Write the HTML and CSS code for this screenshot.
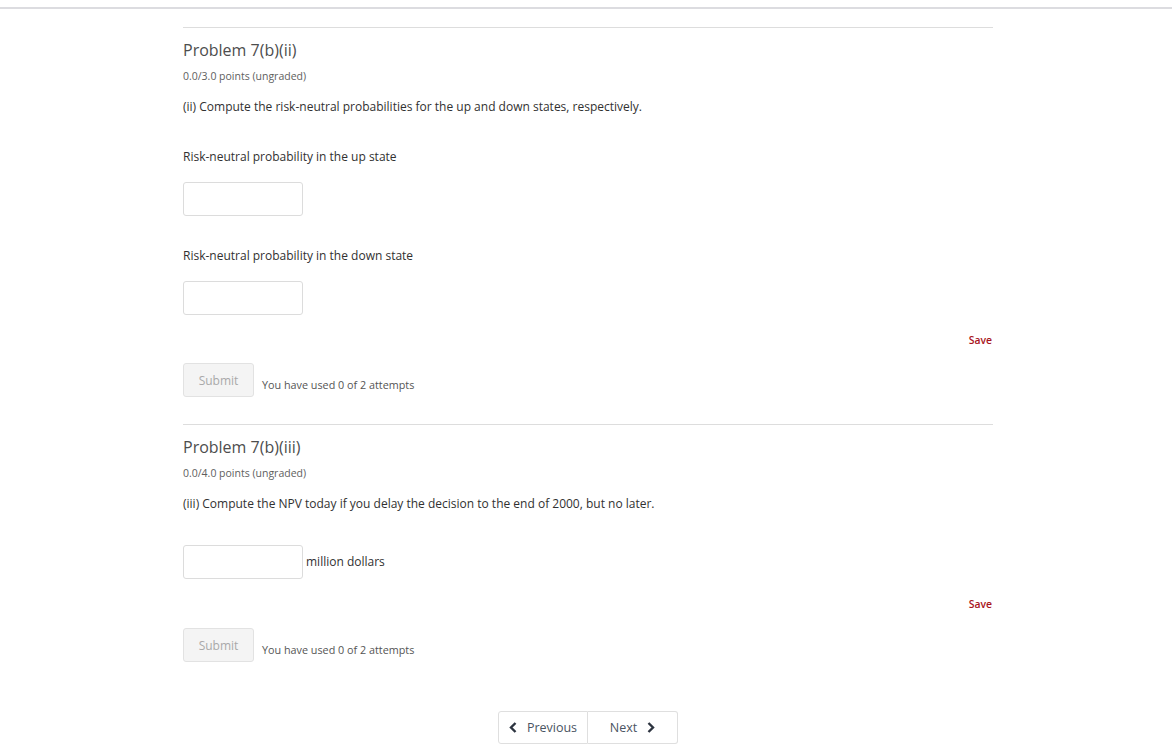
FILE: index.html
```html
<!DOCTYPE html>
<html lang="en">
<head>
  <meta charset="UTF-8" />
  <title>Problem 7(b)</title>
  <link rel="stylesheet" href="styles.css">
</head>
<body>
  <div class="page">
    <div class="content">

      <!-- Problem 7(b)(ii) -->
      <div class="problem">
        <h3 class="problem-title">Problem 7(b)(ii)</h3>
        <div class="points">0.0/3.0 points (ungraded)</div>
        <p class="question">(ii) Compute the risk-neutral probabilities for the up and down states, respectively.</p>

        <label class="field-label">Risk-neutral probability in the up state</label>
        <input class="answer" type="text">

        <label class="field-label second">Risk-neutral probability in the down state</label>
        <input class="answer" type="text">

        <div class="save-row"><span class="save">Save</span></div>
        <div class="submit-row">
          <button class="submit" disabled>Submit</button>
          <span class="attempts">You have used 0 of 2 attempts</span>
        </div>
      </div>

      <!-- Problem 7(b)(iii) -->
      <div class="problem">
        <h3 class="problem-title">Problem 7(b)(iii)</h3>
        <div class="points">0.0/4.0 points (ungraded)</div>
        <p class="question">(iii) Compute the NPV today if you delay the decision to the end of 2000, but no later.</p>

        <div class="unit-row">
          <input class="answer" type="text">
          <span class="unit">million dollars</span>
        </div>

        <div class="save-row"><span class="save">Save</span></div>
        <div class="submit-row last">
          <button class="submit" disabled>Submit</button>
          <span class="attempts">You have used 0 of 2 attempts</span>
        </div>
      </div>

      <div class="nav">
        <button class="nav-btn">
          <svg width="8" height="11" viewBox="0 0 8 11"><path d="M6.5 1 L2 5.5 L6.5 10" fill="none" stroke="#2d3440" stroke-width="2.4"/></svg>
          Previous
        </button>
        <button class="nav-btn">
          Next
          <svg width="8" height="11" viewBox="0 0 8 11"><path d="M1.5 1 L6 5.5 L1.5 10" fill="none" stroke="#2d3440" stroke-width="2.4"/></svg>
        </button>
      </div>

    </div>
  </div>
</body>
</html>
```

FILE: styles.css
```css
body {
  margin: 0;
  background: #fff;
  font-family: 'Open Sans', sans-serif;
  color: #313131;
}

.page {
  margin-top: 7px;
  border-top: 2px solid #dcdce0;
  padding-left: 4px;
}

.content {
  width: 810px;
  margin: 0 auto;
  padding-top: 18px;
}

.problem {
  border-top: 1px solid #dddddd;
}

.problem-title {
  margin: 12px 0 0;
  font-size: 16px;
  line-height: 20px;
  font-weight: 400;
  color: #4d4d4d;
}

.points {
  margin-top: 9px;
  font-size: 10.5px;
  line-height: 14px;
  color: #5e5e5e;
}

.question {
  margin: 16px 0 0;
  font-size: 12px;
  line-height: 16px;
}

.field-label {
  display: block;
  margin-top: 34px;
  font-size: 12px;
  line-height: 16px;
}

.field-label.second {
  margin-top: 32px;
}

.answer {
  display: block;
  box-sizing: border-box;
  width: 120px;
  height: 34px;
  margin: 17px 0 0;
  border: 1px solid #dcdcdc;
  border-radius: 3px;
  background: #fff;
}

.unit-row {
  display: flex;
  align-items: center;
  gap: 3px;
  margin-top: 33px;
}

.unit-row .answer {
  margin: 0;
}

.unit {
  font-size: 12px;
  line-height: 16px;
}

.save-row {
  margin-top: 18px;
  text-align: right;
  padding-right: 1px;
  font-size: 10.4px;
  line-height: 14px;
}

.save {
  font-weight: 600;
  color: #a8141c;
}

.submit-row {
  display: flex;
  align-items: flex-end;
  gap: 8px;
  margin-top: 16px;
  margin-bottom: 27px;
}

.submit-row.last {
  margin-top: 17px;
  margin-bottom: 49px;
}

.submit {
  box-sizing: border-box;
  width: 71px;
  height: 34px;
  padding: 0;
  border: 1px solid #e2e2e2;
  border-radius: 3px;
  background: #f4f4f4;
  font-family: 'Open Sans', sans-serif;
  font-size: 12px;
  color: #a9a9a9;
}

.attempts {
  font-size: 10.8px;
  line-height: 14px;
  padding-bottom: 5px;
  color: #555;
}

.nav {
  display: flex;
  justify-content: center;
}

.nav-btn {
  box-sizing: border-box;
  display: flex;
  align-items: center;
  justify-content: center;
  gap: 10px;
  width: 90px;
  height: 33px;
  padding: 0;
  border: 1px solid #dfdfdf;
  background: #fff;
  font-family: 'Open Sans', sans-serif;
  font-size: 12.5px;
  color: #4a5462;
}

.nav-btn:first-child {
  border-radius: 3px 0 0 3px;
}

.nav-btn:last-child {
  border-left: none;
  border-radius: 0 3px 3px 0;
}
```
